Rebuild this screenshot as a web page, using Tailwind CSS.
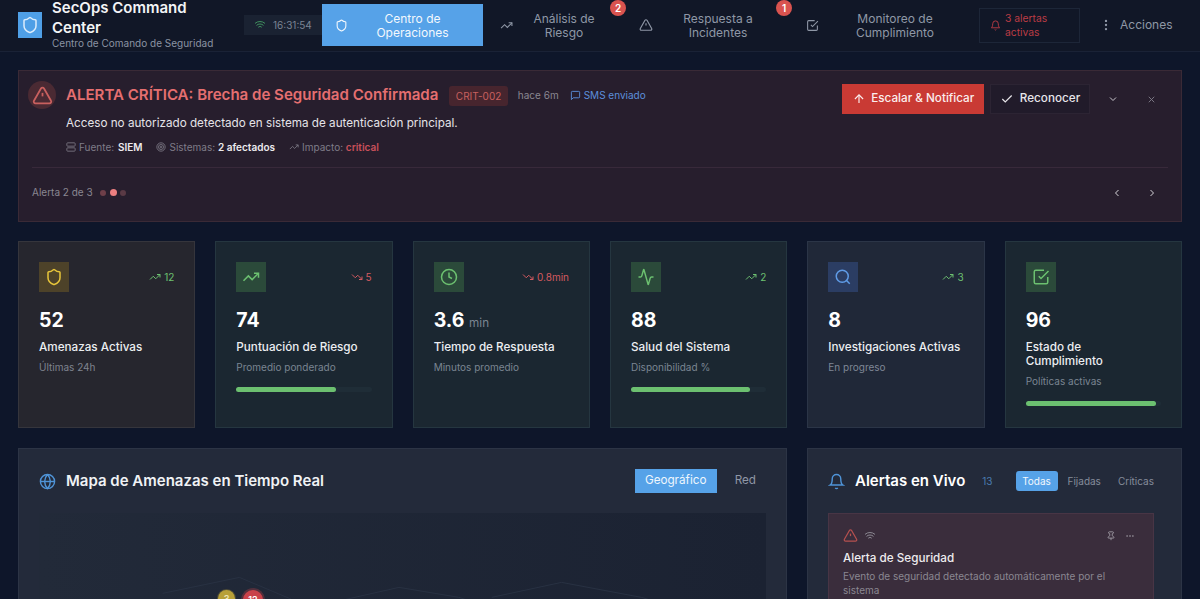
<!DOCTYPE html>
<html lang="es">
    <head>
        <title>SecOps Command Center</title>
        <meta charset="UTF-8" />
        <meta name="viewport" content="width=device-width, initial-scale=1.0">
        <script src="https://cdn.jsdelivr.net/npm/@tailwindcss/browser@4"></script>
    </head>

    <body class="h-screen overflow-hidden bg-[#0e162a] font-[Inter,sans-serif] text-white">
        <svg class="hidden">
            <symbol id="i-shield" viewBox="0 0 24 24"><path d="M20 13c0 5-3.5 7.5-7.66 8.95a1 1 0 0 1-.67-.01C7.5 20.5 4 18 4 13V6a1 1 0 0 1 1-1c2 0 4.5-1.2 6.24-2.72a1.17 1.17 0 0 1 1.52 0C14.51 3.81 17 5 19 5a1 1 0 0 1 1 1z"/></symbol>
            <symbol id="i-up" viewBox="0 0 24 24"><polyline points="22 7 13.5 15.5 8.5 10.5 2 17"/><polyline points="16 7 22 7 22 13"/></symbol>
            <symbol id="i-down" viewBox="0 0 24 24"><polyline points="22 17 13.5 8.5 8.5 13.5 2 7"/><polyline points="16 17 22 17 22 11"/></symbol>
            <symbol id="i-alert" viewBox="0 0 24 24"><path d="m21.73 18-8-14a2 2 0 0 0-3.48 0l-8 14A2 2 0 0 0 4 21h16a2 2 0 0 0 1.73-3"/><path d="M12 9v4"/><path d="M12 17h.01"/></symbol>
            <symbol id="i-check-sq" viewBox="0 0 24 24"><path d="m9 11 3 3L22 4"/><path d="M21 12v7a2 2 0 0 1-2 2H5a2 2 0 0 1-2-2V5a2 2 0 0 1 2-2h11"/></symbol>
            <symbol id="i-wifi" viewBox="0 0 24 24"><path d="M12 20h.01"/><path d="M2 8.82a15 15 0 0 1 20 0"/><path d="M5 12.859a10 10 0 0 1 14 0"/><path d="M8.5 16.429a5 5 0 0 1 7 0"/></symbol>
            <symbol id="i-bell" viewBox="0 0 24 24"><path d="M6 8a6 6 0 0 1 12 0c0 7 3 9 3 9H3s3-2 3-9"/><path d="M10.3 21a1.94 1.94 0 0 0 3.4 0"/></symbol>
            <symbol id="i-dots-v" viewBox="0 0 24 24"><circle cx="12" cy="12" r="1"/><circle cx="12" cy="5" r="1"/><circle cx="12" cy="19" r="1"/></symbol>
            <symbol id="i-dots-h" viewBox="0 0 24 24"><circle cx="12" cy="12" r="1"/><circle cx="19" cy="12" r="1"/><circle cx="5" cy="12" r="1"/></symbol>
            <symbol id="i-server" viewBox="0 0 24 24"><rect width="20" height="8" x="2" y="2" rx="2"/><rect width="20" height="8" x="2" y="14" rx="2"/><path d="M6 6h.01"/><path d="M6 18h.01"/></symbol>
            <symbol id="i-target" viewBox="0 0 24 24"><circle cx="12" cy="12" r="10"/><circle cx="12" cy="12" r="6"/><circle cx="12" cy="12" r="2"/></symbol>
            <symbol id="i-msg" viewBox="0 0 24 24"><path d="M21 15a2 2 0 0 1-2 2H7l-4 4V5a2 2 0 0 1 2-2h14a2 2 0 0 1 2 2z"/></symbol>
            <symbol id="i-arrow-up" viewBox="0 0 24 24"><path d="m5 12 7-7 7 7"/><path d="M12 19V5"/></symbol>
            <symbol id="i-check" viewBox="0 0 24 24"><path d="M20 6 9 17l-5-5"/></symbol>
            <symbol id="i-chev-d" viewBox="0 0 24 24"><path d="m6 9 6 6 6-6"/></symbol>
            <symbol id="i-chev-l" viewBox="0 0 24 24"><path d="m15 18-6-6 6-6"/></symbol>
            <symbol id="i-chev-r" viewBox="0 0 24 24"><path d="m9 18 6-6-6-6"/></symbol>
            <symbol id="i-x" viewBox="0 0 24 24"><path d="M18 6 6 18"/><path d="m6 6 12 12"/></symbol>
            <symbol id="i-clock" viewBox="0 0 24 24"><circle cx="12" cy="12" r="10"/><polyline points="12 6 12 12 16 14"/></symbol>
            <symbol id="i-activity" viewBox="0 0 24 24"><path d="M22 12h-2.48a2 2 0 0 0-1.93 1.46l-2.35 8.36a.25.25 0 0 1-.48 0L9.24 2.18a.25.25 0 0 0-.48 0l-2.35 8.36A2 2 0 0 1 4.49 12H2"/></symbol>
            <symbol id="i-search" viewBox="0 0 24 24"><circle cx="11" cy="11" r="8"/><path d="m21 21-4.3-4.3"/></symbol>
            <symbol id="i-globe" viewBox="0 0 24 24"><circle cx="12" cy="12" r="10"/><path d="M12 2a14.5 14.5 0 0 0 0 20 14.5 14.5 0 0 0 0-20"/><path d="M2 12h20"/></symbol>
            <symbol id="i-pin" viewBox="0 0 24 24"><path d="M12 17v5"/><path d="M9 10.76a2 2 0 0 1-1.11 1.79l-1.78.9A2 2 0 0 0 5 15.24V16a1 1 0 0 0 1 1h12a1 1 0 0 0 1-1v-.76a2 2 0 0 0-1.11-1.79l-1.78-.9A2 2 0 0 1 15 10.76V7a1 1 0 0 1 1-1 2 2 0 0 0 0-4H8a2 2 0 0 0 0 4 1 1 0 0 1 1 1z"/></symbol>
        </svg>

        <!-- top bar -->
        <header class="flex h-[52px] items-center border-b border-[#1a2236] bg-[#111727] pb-[1px] pl-[18px]">
            <div class="flex h-[26px] w-[24px] shrink-0 items-center justify-center bg-[#4f9fe6] text-white">
                <svg class="h-[18px] w-[18px] fill-none stroke-[#dcecfb] stroke-2"><use href="#i-shield"/></svg>
            </div>
            <div class="ml-[10px] w-[192px] shrink-0 pb-[4px]">
                <div class="w-[170px] text-[15px] leading-[20px] font-semibold text-[#f3f4f6]">SecOps Command Center</div>
                <div class="-mt-[1px] text-[10px] leading-[12px] whitespace-nowrap text-[#8b93a3]">Centro de Comando de Seguridad</div>
            </div>
            <div class="flex h-[20px] w-[78px] shrink-0 items-center gap-[7px] bg-[#1a2232] pl-[10px] text-[10px] text-[#7b8494]">
                <svg class="h-[12px] w-[12px] fill-none stroke-[#3f8f5e] stroke-2"><use href="#i-wifi"/></svg>
                16:31:54
            </div>
            <nav class="flex h-[42px] shrink-0 items-center text-xs leading-[14px]">
                <a class="flex h-full w-[161px] items-center bg-[#56a2e8] pl-[13px] text-[#f3f8fd]">
                    <svg class="h-[13px] w-[13px] shrink-0 fill-none stroke-current stroke-2"><use href="#i-shield"/></svg>
                    <span class="mt-[1px] flex-1 pr-[6px] text-center">Centro de Operaciones</span>
                </a>
                <a class="relative flex h-full w-[142px] items-center pl-[17px] text-[#8f97a6]">
                    <svg class="h-[13px] w-[13px] shrink-0 fill-none stroke-current stroke-2"><use href="#i-up"/></svg>
                    <span class="mt-[1px] ml-[11px] w-[76px] pl-[4px] text-center">Análisis de Riesgo</span>
                    <span class="absolute top-[-4px] left-[127px] flex h-[16px] w-[16px] items-center justify-center rounded-full bg-[#d9534f] text-[10px] font-semibold text-white">2</span>
                </a>
                <a class="relative flex h-full w-[165px] items-center pl-[14px] text-[#8f97a6]">
                    <svg class="h-[14px] w-[14px] shrink-0 fill-none stroke-current stroke-2"><use href="#i-alert"/></svg>
                    <span class="mt-[1px] ml-[25px] w-[80px] text-center">Respuesta a Incidentes</span>
                    <span class="absolute top-[-4px] left-[151px] flex h-[16px] w-[16px] items-center justify-center rounded-full bg-[#d9534f] text-[10px] font-semibold text-white">1</span>
                </a>
                <a class="flex h-full w-[189px] items-center pl-[16px] text-[#8f97a6]">
                    <svg class="h-[13px] w-[13px] shrink-0 fill-none stroke-current stroke-2"><use href="#i-check-sq"/></svg>
                    <span class="mt-[1px] ml-[31px] w-[90px] text-center">Monitoreo de Cumplimiento</span>
                </a>
            </nav>
            <div class="flex h-[35px] w-[101px] shrink-0 items-center border border-[#1d2638] pl-[10px] text-[10.3px] leading-[14px] text-[#bb3c45]">
                <svg class="h-[11px] w-[11px] shrink-0 fill-none stroke-current stroke-2"><use href="#i-bell"/></svg>
                <span class="ml-[4px]">3 alertas activas</span>
            </div>
            <div class="ml-[19px] flex items-center text-xs text-[#8f97a6]">
                <svg class="h-[14px] w-[14px] fill-none stroke-current stroke-2"><use href="#i-dots-v"/></svg>
                <span class="ml-[7px]">Acciones</span>
            </div>
        </header>

        <main class="px-[18px] pt-[18px]">
            <!-- critical alert -->
            <section class="h-[152px] border border-[#3a2a36] bg-[#271e2d] px-[13px]">
                <div class="relative flex h-[96px] pt-[10px]">
                    <div class="-ml-[4px] flex h-[28px] w-[28px] shrink-0 items-center justify-center rounded-full bg-[#4a2a33] text-[#c9605f]">
                        <svg class="h-[21px] w-[21px] fill-none stroke-current stroke-2"><use href="#i-alert"/></svg>
                    </div>
                    <div class="ml-[10px] flex-1">
                        <div class="flex h-[29px] items-center">
                            <h2 class="text-[15.05px] font-semibold text-[#e56f70]">ALERTA CRÍTICA: Brecha de Seguridad Confirmada</h2>
                            <span class="ml-[11px] rounded-[3px] bg-[#47252e] px-[6.5px] py-[3px] text-[10px] leading-[14px] text-[#c9605f]">CRIT-002</span>
                            <span class="ml-[10px] text-[10px] text-[#8a8791]">hace 6m</span>
                            <span class="ml-[11px] flex items-center gap-[3px] text-[10px] text-[#5c8fdc]">
                                <svg class="h-[11px] w-[11px] fill-none stroke-current stroke-2"><use href="#i-msg"/></svg>
                                SMS enviado
                            </span>
                        </div>
                        <p class="mt-[3px] text-[11.7px] leading-[20px] text-[#e5e3e8]">Acceso no autorizado detectado en sistema de autenticación principal.</p>
                        <div class="mt-[7px] flex items-center text-[10px] leading-[14px] text-[#7f7c88]">
                            <svg class="mr-[3px] h-[10px] w-[10px] fill-none stroke-current stroke-2"><use href="#i-server"/></svg>
                            Fuente:&nbsp;<b class="ml-[1px] font-semibold text-[#eceaee]">SIEM</b>
                            <svg class="mr-[3px] ml-[14px] h-[10px] w-[10px] fill-none stroke-current stroke-2"><use href="#i-target"/></svg>
                            Sistemas:&nbsp;<b class="font-semibold text-[#eceaee]">2 afectados</b>
                            <svg class="mr-[3px] ml-[14px] h-[10px] w-[10px] fill-none stroke-current stroke-2"><use href="#i-up"/></svg>
                            Impacto:&nbsp;<b class="font-semibold text-[#c9505a]">critical</b>
                        </div>
                    </div>
                    <div class="absolute top-[13px] right-[11px] flex items-center">
                        <button class="flex h-[30px] w-[142px] items-center justify-center gap-[5.5px] bg-[#c93a34] text-[11.7px] font-medium text-[#fbeeee]">
                            <svg class="h-[14px] w-[14px] fill-none stroke-current stroke-2"><use href="#i-arrow-up"/></svg>
                            Escalar &amp; Notificar
                        </button>
                        <button class="ml-[6px] flex h-[30px] w-[100px] items-center justify-center gap-[6px] border border-[#2c2433] bg-[#211b2a] text-[11.7px] font-medium text-[#e8e6ea]">
                            <svg class="h-[14px] w-[14px] fill-none stroke-current stroke-2"><use href="#i-check"/></svg>
                            Reconocer
                        </button>
                        <svg class="ml-[17px] h-[12px] w-[12px] fill-none stroke-[#c9c7cd] stroke-2"><use href="#i-chev-d"/></svg>
                        <svg class="ml-[27px] h-[11px] w-[11px] fill-none stroke-[#7f7c88] stroke-2"><use href="#i-x"/></svg>
                    </div>
                </div>
                <div class="flex h-[50px] items-center justify-between border-t border-[#38293a] pr-[10px] text-[10px] text-[#8a8791]">
                    <div class="flex items-center">
                        Alerta 2 de 3
                        <span class="ml-[7px] h-[6px] w-[6px] rounded-full bg-[#6e3f49]"></span>
                        <span class="ml-[4px] h-[7px] w-[7px] rounded-full bg-[#ec7f80]"></span>
                        <span class="ml-[3px] h-[6px] w-[6px] rounded-full bg-[#5a3a45]"></span>
                    </div>
                    <div class="flex items-center gap-[23px]">
                        <svg class="h-[12px] w-[12px] fill-none stroke-[#d5d3d8] stroke-2"><use href="#i-chev-l"/></svg>
                        <svg class="h-[12px] w-[12px] fill-none stroke-[#d5d3d8] stroke-2"><use href="#i-chev-r"/></svg>
                    </div>
                </div>
            </section>

            <!-- stats -->
            <section class="mt-[19px] grid h-[187px] grid-cols-6 gap-[20px]">
                <article class="border border-[#35353c] bg-[#26262e] p-[20px]">
                    <div class="flex items-center justify-between">
                        <div class="flex h-[30px] w-[30px] items-center justify-center bg-[#4d4229] text-[#e8c63a]"><svg class="h-[18px] w-[18px] fill-none stroke-current stroke-2"><use href="#i-shield"/></svg></div>
                        <span class="flex items-center gap-[3px] text-[10px] text-[#6cc070]"><svg class="h-[12px] w-[12px] fill-none stroke-current stroke-2"><use href="#i-up"/></svg>12</span>
                    </div>
                    <div class="mt-[14px] h-[28px] text-[19.5px] leading-[28px] font-bold">52</div>
                    <div class="mt-[6px] text-[11.7px] leading-[14px] font-medium text-[#eceef1]">Amenazas Activas</div>
                    <div class="mt-[6px] text-[10px] leading-[14px] text-[#7f838e]">Últimas 24h</div>
                </article>
                <article class="border border-[#253640] bg-[#1b2731] p-[20px]">
                    <div class="flex items-center justify-between">
                        <div class="flex h-[30px] w-[30px] items-center justify-center bg-[#2b4a3a] text-[#6cc070]"><svg class="h-[18px] w-[18px] fill-none stroke-current stroke-2"><use href="#i-up"/></svg></div>
                        <span class="flex items-center gap-[3px] text-[10px] text-[#d45a60]"><svg class="h-[12px] w-[12px] fill-none stroke-current stroke-2"><use href="#i-down"/></svg>5</span>
                    </div>
                    <div class="mt-[14px] h-[28px] text-[19.5px] leading-[28px] font-bold">74</div>
                    <div class="mt-[6px] text-[11.7px] leading-[14px] font-medium text-[#eceef1]">Puntuación de Riesgo</div>
                    <div class="mt-[6px] text-[10px] leading-[14px] text-[#7a8591]">Promedio ponderado</div>
                    <div class="mt-[13px] h-[5px] rounded-full bg-[#1f2d37]"><div class="h-full rounded-full bg-[#6cc070]" style="width:74%"></div></div>
                </article>
                <article class="border border-[#253640] bg-[#1b2731] p-[20px]">
                    <div class="flex items-center justify-between">
                        <div class="flex h-[30px] w-[30px] items-center justify-center bg-[#2b4a3a] text-[#6cc070]"><svg class="h-[18px] w-[18px] fill-none stroke-current stroke-2"><use href="#i-clock"/></svg></div>
                        <span class="flex items-center gap-[3px] text-[10px] text-[#d45a60]"><svg class="h-[12px] w-[12px] fill-none stroke-current stroke-2"><use href="#i-down"/></svg>0.8min</span>
                    </div>
                    <div class="mt-[14px] h-[28px] text-[19.5px] leading-[28px] font-bold">3.6 <span class="text-[11.7px] font-normal text-[#7a8591]">min</span></div>
                    <div class="mt-[6px] text-[11.7px] leading-[14px] font-medium text-[#eceef1]">Tiempo de Respuesta</div>
                    <div class="mt-[6px] text-[10px] leading-[14px] text-[#7a8591]">Minutos promedio</div>
                </article>
                <article class="border border-[#253640] bg-[#1b2731] p-[20px]">
                    <div class="flex items-center justify-between">
                        <div class="flex h-[30px] w-[30px] items-center justify-center bg-[#2b4a3a] text-[#6cc070]"><svg class="h-[18px] w-[18px] fill-none stroke-current stroke-2"><use href="#i-activity"/></svg></div>
                        <span class="flex items-center gap-[3px] text-[10px] text-[#6cc070]"><svg class="h-[12px] w-[12px] fill-none stroke-current stroke-2"><use href="#i-up"/></svg>2</span>
                    </div>
                    <div class="mt-[14px] h-[28px] text-[19.5px] leading-[28px] font-bold">88</div>
                    <div class="mt-[6px] text-[11.7px] leading-[14px] font-medium text-[#eceef1]">Salud del Sistema</div>
                    <div class="mt-[6px] text-[10px] leading-[14px] text-[#7a8591]">Disponibilidad %</div>
                    <div class="mt-[13px] h-[5px] rounded-full bg-[#1f2d37]"><div class="h-full rounded-full bg-[#6cc070]" style="width:88%"></div></div>
                </article>
                <article class="border border-[#2b3547] bg-[#202838] p-[20px]">
                    <div class="flex items-center justify-between">
                        <div class="flex h-[30px] w-[30px] items-center justify-center bg-[#2b3d63] text-[#5f9be6]"><svg class="h-[18px] w-[18px] fill-none stroke-current stroke-2"><use href="#i-search"/></svg></div>
                        <span class="flex items-center gap-[3px] text-[10px] text-[#6cc070]"><svg class="h-[12px] w-[12px] fill-none stroke-current stroke-2"><use href="#i-up"/></svg>3</span>
                    </div>
                    <div class="mt-[14px] h-[28px] text-[19.5px] leading-[28px] font-bold">8</div>
                    <div class="mt-[6px] text-[11.7px] leading-[14px] font-medium whitespace-nowrap text-[#eceef1]">Investigaciones Activas</div>
                    <div class="mt-[6px] text-[10px] leading-[14px] text-[#7f8796]">En progreso</div>
                </article>
                <article class="border border-[#253640] bg-[#1b2731] p-[20px]">
                    <div class="flex items-center justify-between">
                        <div class="flex h-[30px] w-[30px] items-center justify-center bg-[#2b4a3a] text-[#6cc070]"><svg class="h-[18px] w-[18px] fill-none stroke-current stroke-2"><use href="#i-check-sq"/></svg></div>
                    </div>
                    <div class="mt-[14px] h-[28px] text-[19.5px] leading-[28px] font-bold">96</div>
                    <div class="mt-[6px] text-[11.7px] leading-[14px] font-medium text-[#eceef1]">Estado de Cumplimiento</div>
                    <div class="mt-[6px] text-[10px] leading-[14px] text-[#7a8591]">Políticas activas</div>
                    <div class="mt-[13px] h-[5px] rounded-full bg-[#1f2d37]"><div class="h-full rounded-full bg-[#6cc070]" style="width:96%"></div></div>
                </article>
            </section>

            <!-- map + live alerts -->
            <section class="mt-[20px] grid grid-cols-[769px_375px] gap-[20px]">
                <div class="h-[500px] border border-[#2c3445] bg-[#232a3a] px-[20px]">
                    <div class="flex h-[64px] items-center justify-between">
                        <div class="flex items-center">
                            <svg class="h-[17px] w-[17px] fill-none stroke-[#4f94d8] stroke-2"><use href="#i-globe"/></svg>
                            <h3 class="ml-[10px] text-[15px] font-semibold text-[#f0f2f5]">Mapa de Amenazas en Tiempo Real</h3>
                        </div>
                        <div class="flex items-center text-[11.7px]">
                            <span class="flex h-[24px] w-[82px] items-center justify-center bg-[#56a2e8] text-[#eef6fd]">Geográfico</span>
                            <span class="mr-[10px] ml-[18px] text-[#8f97a6]">Red</span>
                        </div>
                    </div>
                    <div class="relative h-[420px] bg-linear-to-r from-[#222a39] to-[#1b2232]">
                        <svg class="absolute inset-0 h-full w-full fill-none stroke-[#283142]" viewBox="0 0 729 420">
                            <path d="M124 80 201 64 251 85 300 110"/>
                            <path d="M290 90 361 74 421 84 470 100"/>
                            <path d="M454 84 524 69 604 84 660 100"/>
                        </svg>
                        <span class="absolute top-[77px] left-[179px] flex h-[17px] w-[17px] items-center justify-center rounded-full bg-[#b8a038] text-[9px] font-semibold text-[#efe6b8] ring-1 ring-[#b8a038]/30">3</span>
                        <span class="absolute top-[77px] left-[204px] flex h-[20px] w-[20px] items-center justify-center rounded-full bg-[#c9424a] text-[9px] font-semibold ring-2 ring-[#c9424a]/30">12</span>
                    </div>
                </div>
                <div class="h-[500px] border border-[#2c3445] bg-[#232a3a] pr-[27px] pl-[20px]">
                    <div class="flex h-[64px] items-center">
                        <svg class="h-[17px] w-[17px] shrink-0 fill-none stroke-[#4f94d8] stroke-2"><use href="#i-bell"/></svg>
                        <h3 class="ml-[10px] text-[15px] font-semibold whitespace-nowrap">Alertas en Vivo</h3>
                        <span class="ml-[17px] text-[10px] text-[#4a7cb0]">13</span>
                        <div class="ml-[23px] flex items-center text-[10px] text-[#858c9b]">
                            <span class="flex h-[20px] w-[42px] items-center justify-center rounded-[3px] bg-[#56a2e8] text-[#f2f8fd]">Todas</span>
                            <span class="ml-[10px]">Fijadas</span>
                            <span class="ml-[17px]">Críticas</span>
                        </div>
                    </div>
                    <div class="h-[200px] border border-[#483545] bg-[#3a2d3c] px-[14px] pt-[14px]">
                        <div class="flex items-center justify-between">
                            <div class="flex items-center gap-[6px]">
                                <svg class="h-[15px] w-[15px] fill-none stroke-[#b5504f] stroke-2"><use href="#i-alert"/></svg>
                                <svg class="h-[12px] w-[12px] fill-none stroke-[#8a8791] stroke-2"><use href="#i-wifi"/></svg>
                            </div>
                            <div class="flex items-center gap-[9px] pr-[4px] text-[#a8a5ad]">
                                <svg class="h-[10px] w-[10px] fill-none stroke-current stroke-2"><use href="#i-pin"/></svg>
                                <svg class="h-[10px] w-[10px] fill-none stroke-current stroke-2"><use href="#i-dots-h"/></svg>
                            </div>
                        </div>
                        <div class="mt-[7px] text-[11.7px] leading-[16px] font-medium text-[#eeecef]">Alerta de Seguridad</div>
                        <p class="mt-[3px] text-[10px] leading-[14px] text-[#8a8791]">Evento de seguridad detectado automáticamente por el sistema</p>
                    </div>
                </div>
            </section>
        </main>
    </body>
</html>
